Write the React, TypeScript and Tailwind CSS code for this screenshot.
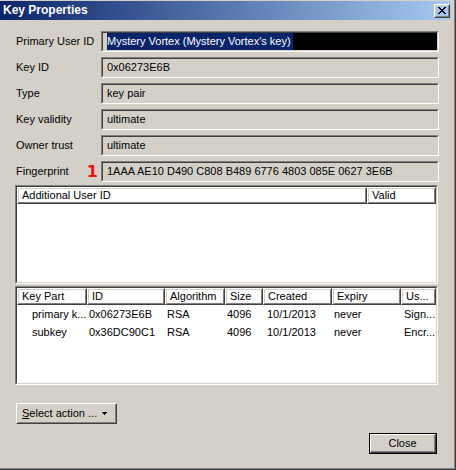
import type { ReactNode } from "react";

const fields: Array<{ label: string; value: string }> = [
  { label: "Key ID", value: "0x06273E6B" },
  { label: "Type", value: "key pair" },
  { label: "Key validity", value: "ultimate" },
  { label: "Owner trust", value: "ultimate" },
];

const subkeys = [
  { part: "primary k...", id: "0x06273E6B", algo: "RSA", size: "4096", created: "10/1/2013", expiry: "never", usage: "Sign..." },
  { part: "subkey", id: "0x36DC90C1", algo: "RSA", size: "4096", created: "10/1/2013", expiry: "never", usage: "Encr..." },
];

function Sunken({ className, children }: { className: string; children?: ReactNode }) {
  return (
    <div className={`${className} border border-t-[#808080] border-l-[#808080] border-b-white border-r-white`}>
      <div className="h-full border border-t-[#404040] border-l-[#404040] border-b-[#d4d0c8] border-r-[#d4d0c8]">
        {children}
      </div>
    </div>
  );
}

function Field({ children }: { children: ReactNode }) {
  return (
    <Sunken className="w-[338px] h-[21px]">
      <div className="h-full flex items-center pl-[4px] whitespace-nowrap overflow-hidden">{children}</div>
    </Sunken>
  );
}

function HeaderCell({ className, children }: { className: string; children: ReactNode }) {
  return (
    <div className={`${className} h-[17px] border border-t-white border-l-white border-b-[#404040] border-r-[#404040]`}>
      <div className="h-full border border-t-[#d4d0c8] border-l-[#d4d0c8] border-b-[#808080] border-r-[#808080] flex items-center pl-[3px] whitespace-nowrap overflow-hidden">
        {children}
      </div>
    </div>
  );
}

export default function App() {
  return (
    <div className="w-[456px] h-[470px] bg-[#d4d0c8] text-black text-[11px] leading-[13px] font-['Liberation_Sans',Arial,sans-serif] border-r border-b border-r-[#404040] border-b-[#404040] overflow-hidden">
      <div className="h-full border-r border-b border-r-[#808080] border-b-[#808080] pt-[1px] pr-[3px]">
        {/* Title bar */}
        <div className="h-[19px] flex items-center justify-between pl-[3px] pr-[1px] bg-[linear-gradient(to_right,#0a246a,#a6caf0)]">
          <span className="text-white font-bold text-[12px]">Key Properties</span>
          <div className="w-[16px] h-[14px] border border-t-white border-l-white border-b-[#404040] border-r-[#404040]">
            <div className="h-full border border-t-[#d4d0c8] border-l-[#d4d0c8] border-b-[#808080] border-r-[#808080] flex items-center justify-center">
              <svg width="8" height="7" viewBox="0 0 8 7" shapeRendering="crispEdges" className="mr-[1px]">
                <path
                  d="M0 0h2v1H0zM6 0h2v1H6zM1 1h2v1H1zM5 1h2v1H5zM2 2h4v1H2zM3 3h2v1H3zM2 4h4v1H2zM1 5h2v1H1zM5 5h2v1H5zM0 6h2v1H0zM6 6h2v1H6z"
                  fill="#000"
                />
              </svg>
            </div>
          </div>
        </div>

        {/* Property rows */}
        <div className="pl-[16px] pt-[11px] flex flex-col gap-[5px]">
          <div className="flex items-center">
            <div className="w-[85px]">Primary User ID</div>
            <Field>
              <span className="h-full flex items-center bg-[#0a246a] text-white pr-[2px]">
                Mystery Vortex (Mystery Vortex's key)
              </span>
              <div className="flex-1 h-full bg-black" />
            </Field>
          </div>
          {fields.map((f) => (
            <div key={f.label} className="flex items-center">
              <div className="w-[85px]">{f.label}</div>
              <Field>{f.value}</Field>
            </div>
          ))}
          <div className="flex items-center">
            <div className="w-[85px] flex items-center">
              <span>Fingerprint</span>
              <span className="ml-auto mr-[3px] text-[16px] leading-[16px] font-bold text-[#f01010] font-['DejaVu_Sans',sans-serif]">
                1
              </span>
            </div>
            <Field>1AAA AE10 D490 C808 B489 6776 4803 085E 0627 3E6B</Field>
          </div>
        </div>

        {/* Additional user IDs */}
        <Sunken className="ml-[15px] mt-[3px] w-[423px] h-[99px]">
          <div className="h-full bg-white">
            <div className="flex">
              <HeaderCell className="w-[350px]">Additional User ID</HeaderCell>
              <HeaderCell className="w-[69px]">Valid</HeaderCell>
            </div>
          </div>
        </Sunken>

        {/* Subkeys */}
        <Sunken className="ml-[15px] mt-[2px] w-[423px] h-[99px]">
          <div className="h-full bg-white">
            <div className="flex">
              <HeaderCell className="w-[70px]">Key Part</HeaderCell>
              <HeaderCell className="w-[78px]">ID</HeaderCell>
              <HeaderCell className="w-[60px]">Algorithm</HeaderCell>
              <HeaderCell className="w-[38px]">Size</HeaderCell>
              <HeaderCell className="w-[69px]">Created</HeaderCell>
              <HeaderCell className="w-[69px]">Expiry</HeaderCell>
              <HeaderCell className="w-[35px]">Us...</HeaderCell>
            </div>
            {subkeys.map((k) => (
              <div key={k.id} className="flex h-[18px] items-center whitespace-nowrap">
                <div className="w-[70px] pl-[15px]">{k.part}</div>
                <div className="w-[78px] pl-[2px]">{k.id}</div>
                <div className="w-[60px] pl-[2px]">{k.algo}</div>
                <div className="w-[38px] pl-[2px]">{k.size}</div>
                <div className="w-[69px] pl-[4px]">{k.created}</div>
                <div className="w-[69px] pl-[2px]">{k.expiry}</div>
                <div className="w-[35px] pl-[3px]">{k.usage}</div>
              </div>
            ))}
          </div>
        </Sunken>

        {/* Buttons */}
        <div className="ml-[16px] mt-[18px] w-[101px] h-[21px] border border-t-white border-l-white border-b-[#404040] border-r-[#404040]">
          <div className="h-full border border-t-[#d4d0c8] border-l-[#d4d0c8] border-b-[#808080] border-r-[#808080] flex items-center pl-[4px]">
            <span>
              <span className="underline">S</span>elect action ...
            </span>
            <svg width="5" height="3" viewBox="0 0 5 3" shapeRendering="crispEdges" className="ml-[5px]">
              <path d="M0 0h5v1H0zM1 1h3v1H1zM2 2h1v1H2z" fill="#000" />
            </svg>
          </div>
        </div>

        <div className="ml-[369px] mt-[9px] w-[68px] h-[21px] border border-black">
          <div className="h-full border border-t-white border-l-white border-b-[#404040] border-r-[#404040]">
            <div className="h-full border-b border-r border-b-[#808080] border-r-[#808080] flex items-center justify-center">
              Close
            </div>
          </div>
        </div>
      </div>
    </div>
  );
}
